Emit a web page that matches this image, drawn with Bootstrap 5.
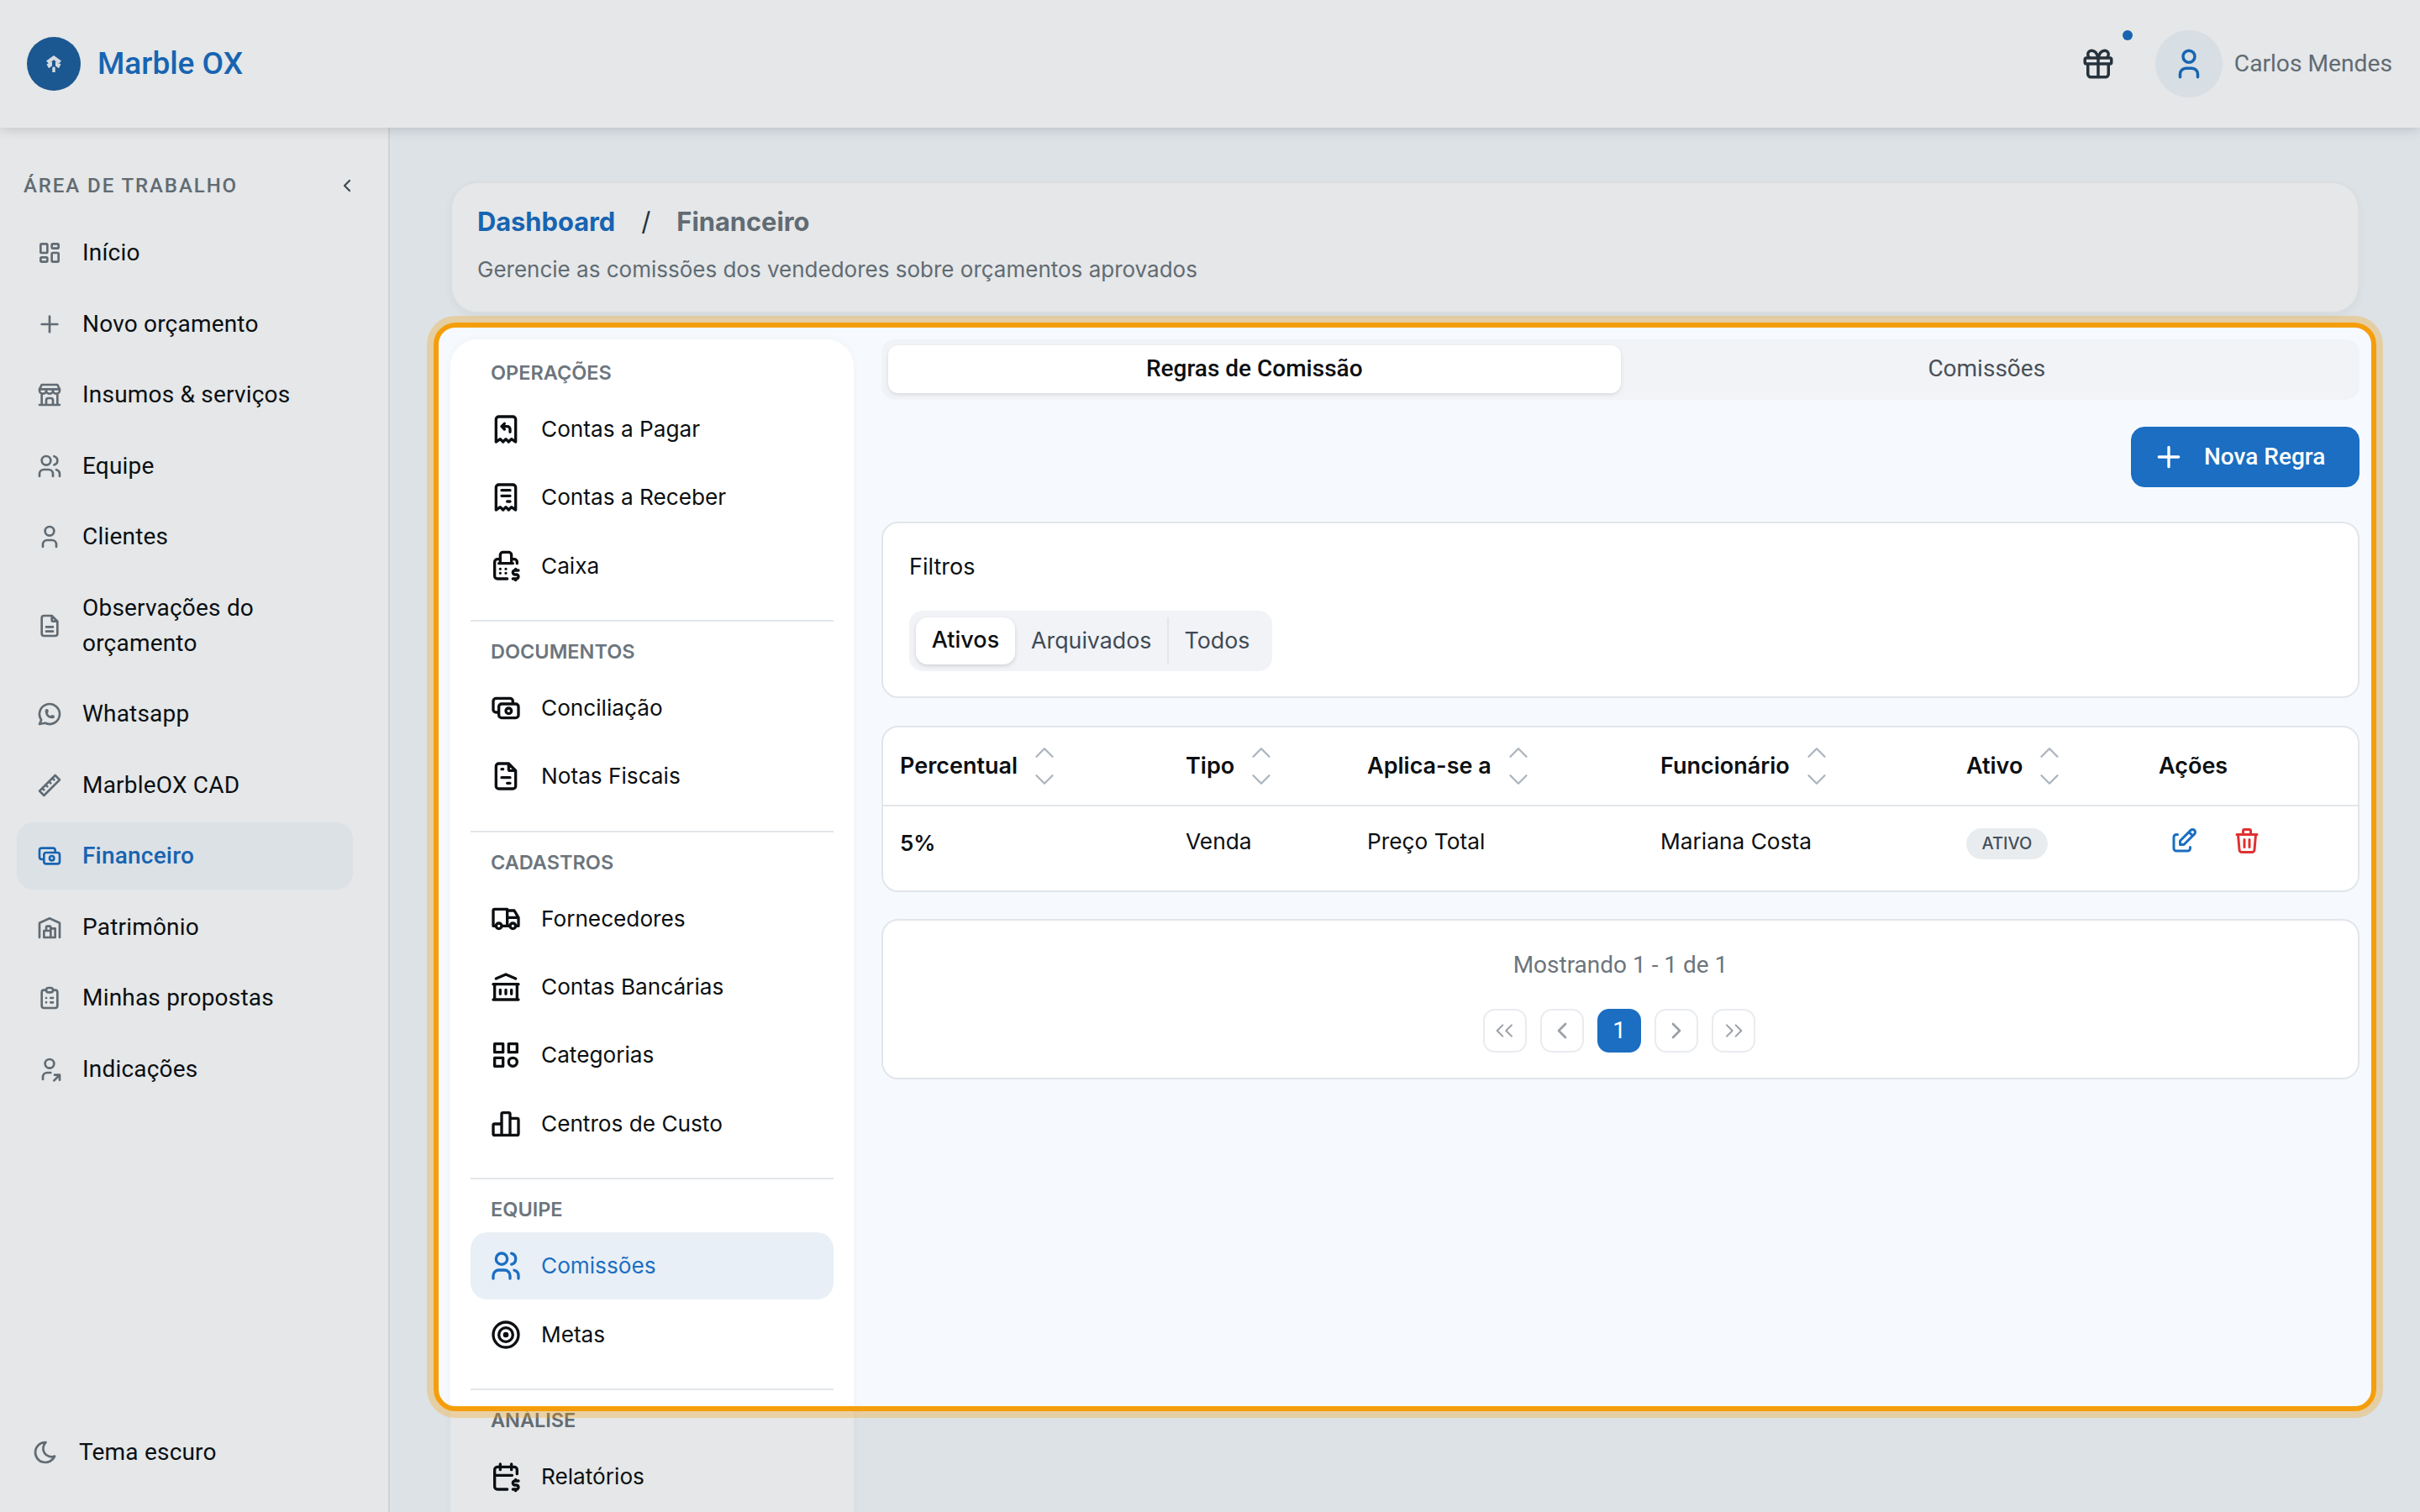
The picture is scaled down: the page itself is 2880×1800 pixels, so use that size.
<!doctype html>
<html lang="pt-BR"><head><meta charset="utf-8"><title>Marble OX</title>
<link href="https://cdn.jsdelivr.net/npm/bootstrap@5.3.0/dist/css/bootstrap.min.css" rel="stylesheet">
<style>
html,body{height:1800px;overflow:hidden}
body{font-family:Inter,"Noto Sans",sans-serif;font-size:26px;line-height:42px;color:#0c0f12;background:#f6fafe}
svg.ic{fill:none;stroke:currentColor;stroke-width:2;stroke-linecap:round;stroke-linejoin:round;flex:none;display:block}
.topbar{height:152px;background:#fff;box-shadow:0 2px 14px rgba(0,0,0,.16);position:relative;z-index:2;padding:0 33px 0 32px}
.logo-disc{width:64px;height:64px;border-radius:50%;background:#1f5f9f}
.brand-name{font-family:Roboto,sans-serif;font-weight:500;font-size:37px;color:#1b6ec2;margin-left:20px}
.gift-wrap{position:relative;width:42px;height:42px;margin-right:47px;color:#2b3640}
.gift-dot{position:absolute;left:50px;top:-19px;width:12px;height:12px;border-radius:50%;background:#1b6ec2}
.avatar-disc{width:80px;height:80px;border-radius:50%;background:#f0f5fb;color:#1b6ec2}
.user-name{font-family:Roboto,sans-serif;font-size:28.2px;color:#6c757d;margin-left:14px}
.shell{height:1648px}
.side{width:464px;background:#fff;border-right:2px solid #e4e9ee;padding:0 42px 0 20px;height:1648px;font-family:Roboto,sans-serif;font-size:28px;letter-spacing:.2px}
.side-head{height:109px;padding:30px 0 1px 8px;font-size:24px;letter-spacing:1.92px;font-weight:500;color:#6c757d}
.side-head span{flex:1}
.side-head svg{color:#444f59;margin-right:-5px;stroke-width:2.2}
.side-list{gap:4.5px}
.side-link{min-height:80px;padding:19px 0 19px 23px;gap:23px;border-radius:20px;color:#0c0f12;text-decoration:none}
.side-link svg{color:#6c757d}
.side-link.on,.side-link.on svg{color:#1b6ec2}
.side-link.on{background:#f5f9fd;font-weight:500}
.theme-row{height:42px;margin:0 0 50px 18px;gap:24px}
.theme-row svg{color:#6c757d}
.page{flex:1;padding:64px 72px 0;min-width:0}
.crumbs{height:157px;background:#fff;border:2px solid #f3f5f7;border-radius:32px;box-shadow:0 3px 8px rgba(0,0,0,.05);padding:22px 30px;margin-bottom:31px}
.crumb-line{font-size:30.8px;font-weight:700;line-height:48px;gap:31px}
.crumb-line a{color:#1b6ec2;text-decoration:none}
.crumb-line i{font-style:normal;font-weight:400;color:#2b3640}
.crumb-line b{color:#6c757d;font-weight:700}
.crumb-sub{color:#6c757d;margin-top:12px}
.split{gap:33px}
.subnav{width:480px;flex:none;background:#fff;border-radius:32px;padding:22px 24px 40px;box-shadow:0 0 10px rgba(30,50,80,.04);font-size:26.2px}
.sub-label{font-size:23.5px;line-height:36px;font-weight:600;color:#6c757d;padding-left:24px;margin-bottom:9px}
.sub-list{gap:1.3px}
.sub-link{height:80px;padding-left:22px;gap:22px;border-radius:20px;color:#0c0f12;text-decoration:none}
.sub-link.on{background:#e8eff6;color:#1b6ec2}
.sub-rule{height:2px;background:#e2e6ea;margin:24.5px 0 18px}
.work{flex:1;min-width:0}
.tabbar{height:72px;background:#f1f3f7;border-radius:16px;padding:7px 8px 8px;margin-bottom:32px;font-family:Roboto,sans-serif;font-size:28px}
.tabbar a{flex:1;height:57px;display:flex;align-items:center;justify-content:center;border-radius:12px;color:#495057;text-decoration:none;padding-bottom:1px}
.tabbar a.on{background:#fff;color:#0c0f12;font-weight:500;box-shadow:0 2px 5px rgba(0,0,0,.1)}
.new-btn{--bs-btn-bg:#1b6ec2;--bs-btn-border-color:#1b6ec2;--bs-btn-color:#fff;--bs-btn-font-size:28px;--bs-btn-font-weight:500;--bs-btn-font-family:Roboto,sans-serif;--bs-btn-border-radius:16px;--bs-btn-padding-x:0;height:72px;width:272px;gap:22px;line-height:42px;padding-left:24px}
.new-wrap{margin-bottom:41px}
.panel{background:#fff;border:2px solid #e2e6ea;border-radius:20px}
.filters{height:210px;padding:31px 31px 0;margin-bottom:33px;font-size:27px}
.seg{width:432px;height:72px;background:#f1f3f7;border-radius:16px;margin-top:31px;padding:8px}
.seg a{flex:none;color:#3f4a55;text-decoration:none;height:56px;display:flex;align-items:center;padding:0 19px 3px;font-size:26.8px}
.seg a.on{background:#fff;color:#0c0f12;border-radius:14px;box-shadow:0 2px 5px rgba(0,0,0,.14);font-weight:500;width:118px;padding:0 0 3px;justify-content:center;font-size:27px}
.seg a.sep{border-left:2px solid #e2e6ea;padding:0 18px 3px}
.grid-wrap{margin-bottom:32px;height:198px;overflow:hidden}
.grid{table-layout:fixed;width:100%;margin:0;--bs-table-bg:transparent;--bs-table-color:#0c0f12}
.grid th,.grid td{padding:0 0 0 20px;border-bottom:2px solid #e2e6ea;vertical-align:middle;line-height:42px}
.grid th{height:93px;font-weight:600;font-size:27px}
.grid td{height:101px;border-bottom:0;font-weight:400;vertical-align:top;padding-top:21px;font-size:26.3px}
.grid td.pct{font-weight:600;padding-top:23px;font-size:26px}
.grid td.pill-cell{padding-top:26px}
.grid td.act-cell{padding-top:23px}
.c1{width:340px}.c2{width:216px}.c3{width:349px}.c4{width:364px}.c5{width:229px}
.sorter{display:inline-flex;flex-direction:column;color:#adb5bd;margin-left:13px}
.sorter svg{stroke-width:1.5}
.sorter svg+svg{margin-top:-6.5px}
.state-pill{display:block;width:97px;height:37px;line-height:37px;background:#e9ecef;color:#43505c;font-size:20px;font-weight:500;border-radius:19px;text-align:center}
.act-row{gap:39px;padding-left:12px}
.act-edit{color:#1b6ec2}.act-del{color:#e03131}
.pager-box{height:191px;padding-top:32px;color:#6c757d;text-align:center;font-family:Roboto,sans-serif;font-size:28px}
.pager-row{gap:16px;margin-top:31px;padding-right:3px}
.pg{width:52px;height:52px;border:2px solid #e9ecef;border-radius:14px;color:#9aa0a6;background:#fff}
.pg.on{background:#1b6ec2;border-color:#1b6ec2;color:#fff}
.pg svg.thin{stroke-width:1.5}
.tour{position:fixed;left:516px;top:384px;width:2312px;height:1296px;border:6px solid #f59e0b;border-radius:26px;box-shadow:0 0 0 8px rgba(245,158,11,.3),0 0 0 4000px rgba(0,16,32,.1);z-index:5;pointer-events:none}
</style></head><body>
<svg width="0" height="0" class="position-absolute"><defs>
<symbol id="i-dash" viewBox="0 0 24 24"><path d="M5 4h4a1 1 0 0 1 1 1v6a1 1 0 0 1 -1 1h-4a1 1 0 0 1 -1 -1v-6a1 1 0 0 1 1 -1M5 16h4a1 1 0 0 1 1 1v2a1 1 0 0 1 -1 1h-4a1 1 0 0 1 -1 -1v-2a1 1 0 0 1 1 -1M15 12h4a1 1 0 0 1 1 1v6a1 1 0 0 1 -1 1h-4a1 1 0 0 1 -1 -1v-6a1 1 0 0 1 1 -1M15 4h4a1 1 0 0 1 1 1v2a1 1 0 0 1 -1 1h-4a1 1 0 0 1 -1 -1v-2a1 1 0 0 1 1 -1"/></symbol>
<symbol id="i-plus" viewBox="0 0 24 24"><path d="M12 5v14M5 12h14"/></symbol>
<symbol id="i-store" viewBox="0 0 24 24"><path d="M3 21h18M3 7v1a3 3 0 0 0 6 0v-1m0 1a3 3 0 0 0 6 0v-1m0 1a3 3 0 0 0 6 0v-1h-18l2 -4h14l2 4M5 21v-10.15M19 21v-10.15M9 21v-4a2 2 0 0 1 2 -2h2a2 2 0 0 1 2 2v4"/></symbol>
<symbol id="i-users" viewBox="0 0 24 24"><path d="M5 7a4 4 0 1 0 8 0a4 4 0 1 0 -8 0M3 21v-2a4 4 0 0 1 4 -4h4a4 4 0 0 1 4 4v2M16 3.13a4 4 0 0 1 0 7.75M21 21v-2a4 4 0 0 0 -3 -3.85"/></symbol>
<symbol id="i-user" viewBox="0 0 24 24"><path d="M8 7a4 4 0 1 0 8 0a4 4 0 0 0 -8 0M6 21v-2a4 4 0 0 1 4 -4h4a4 4 0 0 1 4 4v2"/></symbol>
<symbol id="i-filedesc" viewBox="0 0 24 24"><path d="M14 3v4a1 1 0 0 0 1 1h4M17 21h-10a2 2 0 0 1 -2 -2v-14a2 2 0 0 1 2 -2h7l5 5v11a2 2 0 0 1 -2 2zM9 17h6M9 13h6"/></symbol>
<symbol id="i-wa" viewBox="0 0 24 24"><path d="M3 21l1.65 -3.8a9 9 0 1 1 3.4 2.9l-5.05 .9M9 10a.5 .5 0 0 0 1 0v-1a.5 .5 0 0 0 -1 0v1a5 5 0 0 0 5 5h1a.5 .5 0 0 0 0 -1h-1a.5 .5 0 0 0 0 1"/></symbol>
<symbol id="i-ruler" viewBox="0 0 24 24"><path d="M17 3l4 4l-14 14l-4 -4zM16 7l-1.5 -1.5M13 10l-1.5 -1.5M10 13l-1.5 -1.5M7 16l-1.5 -1.5"/></symbol>
<symbol id="i-cash" viewBox="0 0 24 24"><path d="M7 11a2 2 0 0 1 2 -2h10a2 2 0 0 1 2 2v6a2 2 0 0 1 -2 2h-10a2 2 0 0 1 -2 -2zM12 14a2 2 0 1 0 4 0a2 2 0 0 0 -4 0M17 9v-2a2 2 0 0 0 -2 -2h-10a2 2 0 0 0 -2 2v6a2 2 0 0 0 2 2h2"/></symbol>
<symbol id="i-ware" viewBox="0 0 24 24"><path d="M3 21v-13l9 -4l9 4v13M13 13h4v8h-10v-6h6M13 21v-9a1 1 0 0 0 -1 -1h-2a1 1 0 0 0 -1 1v3"/></symbol>
<symbol id="i-clip" viewBox="0 0 24 24"><path d="M9 5h-2a2 2 0 0 0 -2 2v12a2 2 0 0 0 2 2h10a2 2 0 0 0 2 -2v-12a2 2 0 0 0 -2 -2h-2M9 5a2 2 0 0 1 2 -2h2a2 2 0 0 1 2 2v0a2 2 0 0 1 -2 2h-2a2 2 0 0 1 -2 -2zM9 12h.01M13 12h2M9 16h.01M13 16h2"/></symbol>
<symbol id="i-ushare" viewBox="0 0 24 24"><path d="M8 7a4 4 0 1 0 8 0a4 4 0 0 0 -8 0M6 21v-2a4 4 0 0 1 4 -4h3M16 22l5 -5M21 21.500v-4.500h-4.500"/></symbol>
<symbol id="i-moon" viewBox="0 0 24 24"><path d="M12 3c.132 0 .263 0 .393 0a7.5 7.5 0 0 0 7.92 12.446a9 9 0 1 1 -8.313 -12.454z"/></symbol>
<symbol id="i-left" viewBox="0 0 24 24"><path d="M15 6l-6 6l6 6"/></symbol>
<symbol id="i-right" viewBox="0 0 24 24"><path d="M9 6l6 6l-6 6"/></symbol>
<symbol id="i-up" viewBox="0 0 24 24"><path d="M6 15l6 -6l6 6"/></symbol>
<symbol id="i-down" viewBox="0 0 24 24"><path d="M6 9l6 6l6 -6"/></symbol>
<symbol id="i-lleft" viewBox="0 0 24 24"><path d="M10 7l-5 5l5 5M18 7l-5 5l5 5"/></symbol>
<symbol id="i-rright" viewBox="0 0 24 24"><path d="M6 7l5 5l-5 5M14 7l5 5l-5 5"/></symbol>
<symbol id="i-gift" viewBox="0 0 24 24"><path d="M3 9a1 1 0 0 1 1 -1h16a1 1 0 0 1 1 1v2a1 1 0 0 1 -1 1h-16a1 1 0 0 1 -1 -1zM12 8v13M19 12v7a2 2 0 0 1 -2 2h-10a2 2 0 0 1 -2 -2v-7M7.5 8a2.5 2.5 0 0 1 0 -5a4.8 8 0 0 1 4.5 5a4.8 8 0 0 1 4.5 -5a2.5 2.5 0 0 1 0 5"/></symbol>
<symbol id="i-refund" viewBox="0 0 24 24"><path d="M5 21v-16a2 2 0 0 1 2 -2h10a2 2 0 0 1 2 2v16l-3 -2l-2 2l-2 -2l-2 2l-2 -2l-3 2M15 14v-2a2 2 0 0 0 -2 -2h-4l2 -2m0 4l-2 -2"/></symbol>
<symbol id="i-receipt" viewBox="0 0 24 24"><path d="M5 21v-16a2 2 0 0 1 2 -2h10a2 2 0 0 1 2 2v16l-3 -2l-2 2l-2 -2l-2 2l-2 -2l-3 2m4 -14h6m-6 4h6m-2 4h2"/></symbol>
<symbol id="i-register" viewBox="0 0 24 24"><path d="M21 15h-2.5a1.5 1.5 0 0 0 0 3h1a1.5 1.5 0 0 1 0 3h-2.5M19 21v1m0 -8v1M13 21h-7a2 2 0 0 1 -2 -2v-10a2 2 0 0 1 2 -2h2m12 3.12v-1.12a2 2 0 0 0 -2 -2h-2M16 10v-6a2 2 0 0 0 -2 -2h-4a2 2 0 0 0 -2 2v6m8 0h-8m8 0h1m-9 0h-1M8 14v.01M8 17v.01M12 13.99v.01M12 17v.01"/></symbol>
<symbol id="i-invoice" viewBox="0 0 24 24"><path d="M14 3v4a1 1 0 0 0 1 1h4M17 21h-10a2 2 0 0 1 -2 -2v-14a2 2 0 0 1 2 -2h7l5 5v11a2 2 0 0 1 -2 2zM9 7h1M9 13h6M13 17h2"/></symbol>
<symbol id="i-truck" viewBox="0 0 24 24"><path d="M5 17a2 2 0 1 0 4 0a2 2 0 1 0 -4 0M15 17a2 2 0 1 0 4 0a2 2 0 1 0 -4 0M5 17h-2v-11a1 1 0 0 1 1 -1h9v12m-4 0h6m4 0h2v-6h-8m0 -5h5l3 5"/></symbol>
<symbol id="i-bank" viewBox="0 0 24 24"><path d="M3 21h18M3 10h18M5 6l7 -3l7 3M4 10v11M20 10v11M8 14v3M12 14v3M16 14v3"/></symbol>
<symbol id="i-cat" viewBox="0 0 24 24"><path d="M4 4h6v6h-6zM14 4h6v6h-6zM4 14h6v6h-6zM14 17a3 3 0 1 0 6 0a3 3 0 1 0 -6 0"/></symbol>
<symbol id="i-bars" viewBox="0 0 24 24"><path d="M3 13a1 1 0 0 1 1 -1h4a1 1 0 0 1 1 1v6a1 1 0 0 1 -1 1h-4a1 1 0 0 1 -1 -1zM15 9a1 1 0 0 1 1 -1h4a1 1 0 0 1 1 1v10a1 1 0 0 1 -1 1h-4a1 1 0 0 1 -1 -1zM9 5a1 1 0 0 1 1 -1h4a1 1 0 0 1 1 1v14a1 1 0 0 1 -1 1h-4a1 1 0 0 1 -1 -1zM4 20h14"/></symbol>
<symbol id="i-target" viewBox="0 0 24 24"><path d="M11 12a1 1 0 1 0 2 0a1 1 0 1 0 -2 0M7 12a5 5 0 1 0 10 0a5 5 0 1 0 -10 0M3 12a9 9 0 1 0 18 0a9 9 0 1 0 -18 0"/></symbol>
<symbol id="i-caldollar" viewBox="0 0 24 24"><path d="M13 21h-7a2 2 0 0 1 -2 -2v-12a2 2 0 0 1 2 -2h12a2 2 0 0 1 2 2v3M16 3v4M8 3v4M4 11h12.5M21 15h-2.5a1.5 1.5 0 0 0 0 3h1a1.5 1.5 0 0 1 0 3h-2.5M19 21v1m0 -8v1"/></symbol>
<symbol id="i-edit" viewBox="0 0 24 24"><path d="M7 7h-1a2 2 0 0 0 -2 2v9a2 2 0 0 0 2 2h9a2 2 0 0 0 2 -2v-1M20.385 6.585a2.1 2.1 0 0 0 -2.97 -2.97l-8.415 8.385v3h3l8.385 -8.415zM16 5l3 3"/></symbol>
<symbol id="i-trash" viewBox="0 0 24 24"><path d="M4 7h16M10 11v6M14 11v6M5 7l1 12a2 2 0 0 0 2 2h8a2 2 0 0 0 2 -2l1 -12M9 7v-3a1 1 0 0 1 1 -1h4a1 1 0 0 1 1 1v3"/></symbol>
</defs></svg>

<header class="topbar d-flex align-items-center">
  <div class="logo-disc d-flex align-items-center justify-content-center">
    <svg width="24" height="24" viewBox="0 0 24 24" fill="#eef1f4"><path d="M12 2l9 6.5-3 3.2-6-4.4-6 4.4-3-3.2zM3.5 12.5l6.5-3.2v5.2l-4 2.8zM20.500 12.500l-6.500-3.200v5.200l4 2.800zM10.300 16.500v5.500h3.400v-5.500l-1.700-1.200z"/></svg>
  </div>
  <div class="brand-name">Marble OX</div>
  <div class="ms-auto d-flex align-items-center">
    <div class="gift-wrap"><svg class="ic" width="42" height="42"><use href="#i-gift"/></svg><span class="gift-dot"></span></div>
    <div class="avatar-disc d-flex align-items-center justify-content-center"><svg class="ic" width="42" height="42"><use href="#i-user"/></svg></div>
    <div class="user-name">Carlos Mendes</div>
  </div>
</header>

<div class="shell d-flex">
  <aside class="side d-flex flex-column">
    <div class="side-head d-flex align-items-center"><span>ÁREA DE TRABALHO</span><svg class="ic" width="24" height="24"><use href="#i-left"/></svg></div>
    <nav class="side-list d-flex flex-column">
      <a class="side-link d-flex align-items-center" href="#"><svg class="ic" width="32" height="32"><use href="#i-dash"/></svg>Início</a>
      <a class="side-link d-flex align-items-center" href="#"><svg class="ic" width="32" height="32"><use href="#i-plus"/></svg>Novo orçamento</a>
      <a class="side-link d-flex align-items-center" href="#"><svg class="ic" width="32" height="32"><use href="#i-store"/></svg>Insumos &amp; serviços</a>
      <a class="side-link d-flex align-items-center" href="#"><svg class="ic" width="32" height="32"><use href="#i-users"/></svg>Equipe</a>
      <a class="side-link d-flex align-items-center" href="#"><svg class="ic" width="32" height="32"><use href="#i-user"/></svg>Clientes</a>
      <a class="side-link d-flex align-items-center" href="#"><svg class="ic" width="32" height="32"><use href="#i-filedesc"/></svg><span>Observações do<br>orçamento</span></a>
      <a class="side-link d-flex align-items-center" href="#"><svg class="ic" width="32" height="32"><use href="#i-wa"/></svg>Whatsapp</a>
      <a class="side-link d-flex align-items-center" href="#"><svg class="ic" width="32" height="32"><use href="#i-ruler"/></svg>MarbleOX CAD</a>
      <a class="side-link on d-flex align-items-center" href="#"><svg class="ic" width="32" height="32"><use href="#i-cash"/></svg>Financeiro</a>
      <a class="side-link d-flex align-items-center" href="#"><svg class="ic" width="32" height="32"><use href="#i-ware"/></svg>Patrimônio</a>
      <a class="side-link d-flex align-items-center" href="#"><svg class="ic" width="32" height="32"><use href="#i-clip"/></svg>Minhas propostas</a>
      <a class="side-link d-flex align-items-center" href="#"><svg class="ic" width="32" height="32"><use href="#i-ushare"/></svg>Indicações</a>
    </nav>
    <div class="theme-row mt-auto d-flex align-items-center"><svg class="ic" width="32" height="32"><use href="#i-moon"/></svg>Tema escuro</div>
  </aside>

  <main class="page">
    <div class="crumbs">
      <div class="crumb-line d-flex"><a href="#">Dashboard</a><i>/</i><b>Financeiro</b></div>
      <div class="crumb-sub">Gerencie as comissões dos vendedores sobre orçamentos aprovados</div>
    </div>
    <div class="split d-flex align-items-start">
      <nav class="subnav">
        <div class="sub-label">OPERAÇÕES</div>
        <div class="sub-list d-flex flex-column">
          <a class="sub-link d-flex align-items-center" href="#"><svg class="ic" width="40" height="40"><use href="#i-refund"/></svg>Contas a Pagar</a>
          <a class="sub-link d-flex align-items-center" href="#"><svg class="ic" width="40" height="40"><use href="#i-receipt"/></svg>Contas a Receber</a>
          <a class="sub-link d-flex align-items-center" href="#"><svg class="ic" width="40" height="40"><use href="#i-register"/></svg>Caixa</a>
        </div>
        <div class="sub-rule"></div>
        <div class="sub-label">DOCUMENTOS</div>
        <div class="sub-list d-flex flex-column">
          <a class="sub-link d-flex align-items-center" href="#"><svg class="ic" width="40" height="40"><use href="#i-cash"/></svg>Conciliação</a>
          <a class="sub-link d-flex align-items-center" href="#"><svg class="ic" width="40" height="40"><use href="#i-invoice"/></svg>Notas Fiscais</a>
        </div>
        <div class="sub-rule"></div>
        <div class="sub-label">CADASTROS</div>
        <div class="sub-list d-flex flex-column">
          <a class="sub-link d-flex align-items-center" href="#"><svg class="ic" width="40" height="40"><use href="#i-truck"/></svg>Fornecedores</a>
          <a class="sub-link d-flex align-items-center" href="#"><svg class="ic" width="40" height="40"><use href="#i-bank"/></svg>Contas Bancárias</a>
          <a class="sub-link d-flex align-items-center" href="#"><svg class="ic" width="40" height="40"><use href="#i-cat"/></svg>Categorias</a>
          <a class="sub-link d-flex align-items-center" href="#"><svg class="ic" width="40" height="40"><use href="#i-bars"/></svg>Centros de Custo</a>
        </div>
        <div class="sub-rule"></div>
        <div class="sub-label">EQUIPE</div>
        <div class="sub-list d-flex flex-column">
          <a class="sub-link on d-flex align-items-center" href="#"><svg class="ic" width="40" height="40"><use href="#i-users"/></svg>Comissões</a>
          <a class="sub-link d-flex align-items-center" href="#"><svg class="ic" width="40" height="40"><use href="#i-target"/></svg>Metas</a>
        </div>
        <div class="sub-rule"></div>
        <div class="sub-label">ANÁLISE</div>
        <div class="sub-list d-flex flex-column">
          <a class="sub-link d-flex align-items-center" href="#"><svg class="ic" width="40" height="40"><use href="#i-caldollar"/></svg>Relatórios</a>
        </div>
      </nav>
      <section class="work">
        <div class="tabbar d-flex"><a class="on" href="#">Regras de Comissão</a><a href="#">Comissões</a></div>
        <div class="new-wrap d-flex justify-content-end"><button class="btn new-btn d-flex align-items-center" type="button"><svg class="ic" width="40" height="40"><use href="#i-plus"/></svg>Nova Regra</button></div>
        <div class="panel filters">
          <div>Filtros</div>
          <div class="seg d-flex"><a class="on" href="#">Ativos</a><a href="#">Arquivados</a><a class="sep" href="#">Todos</a></div>
        </div>
        <div class="panel grid-wrap">
          <table class="table grid">
            <colgroup><col class="c1"><col class="c2"><col class="c3"><col class="c4"><col class="c5"><col></colgroup>
            <thead><tr>
              <th><div class="d-flex align-items-center">Percentual<span class="sorter"><svg class="ic" width="38" height="38"><use href="#i-up"/></svg><svg class="ic" width="38" height="38"><use href="#i-down"/></svg></span></div></th>
              <th><div class="d-flex align-items-center">Tipo<span class="sorter"><svg class="ic" width="38" height="38"><use href="#i-up"/></svg><svg class="ic" width="38" height="38"><use href="#i-down"/></svg></span></div></th>
              <th><div class="d-flex align-items-center">Aplica-se a<span class="sorter"><svg class="ic" width="38" height="38"><use href="#i-up"/></svg><svg class="ic" width="38" height="38"><use href="#i-down"/></svg></span></div></th>
              <th><div class="d-flex align-items-center">Funcionário<span class="sorter"><svg class="ic" width="38" height="38"><use href="#i-up"/></svg><svg class="ic" width="38" height="38"><use href="#i-down"/></svg></span></div></th>
              <th><div class="d-flex align-items-center">Ativo<span class="sorter"><svg class="ic" width="38" height="38"><use href="#i-up"/></svg><svg class="ic" width="38" height="38"><use href="#i-down"/></svg></span></div></th>
              <th>Ações</th>
            </tr></thead>
            <tbody><tr>
              <td class="pct">5%</td><td>Venda</td><td>Preço Total</td><td>Mariana Costa</td>
              <td class="pill-cell"><span class="state-pill">ATIVO</span></td>
              <td class="act-cell"><div class="act-row d-flex"><svg class="ic act-edit" width="36" height="36"><use href="#i-edit"/></svg><svg class="ic act-del" width="36" height="36"><use href="#i-trash"/></svg></div></td>
            </tr></tbody>
          </table>
        </div>
        <div class="panel pager-box">
          <div>Mostrando 1 - 1 de 1</div>
          <div class="pager-row d-flex justify-content-center">
            <span class="pg d-flex align-items-center justify-content-center"><svg class="ic thin" width="32" height="32"><use href="#i-lleft"/></svg></span>
            <span class="pg d-flex align-items-center justify-content-center"><svg class="ic" width="32" height="32"><use href="#i-left"/></svg></span>
            <span class="pg on d-flex align-items-center justify-content-center">1</span>
            <span class="pg d-flex align-items-center justify-content-center"><svg class="ic" width="32" height="32"><use href="#i-right"/></svg></span>
            <span class="pg d-flex align-items-center justify-content-center"><svg class="ic thin" width="32" height="32"><use href="#i-rright"/></svg></span>
          </div>
        </div>
      </section>
    </div>
  </main>
</div>
<div class="tour"></div>
<script src="https://cdn.jsdelivr.net/npm/bootstrap@5.3.0/dist/js/bootstrap.bundle.min.js"></script>
</body></html>
